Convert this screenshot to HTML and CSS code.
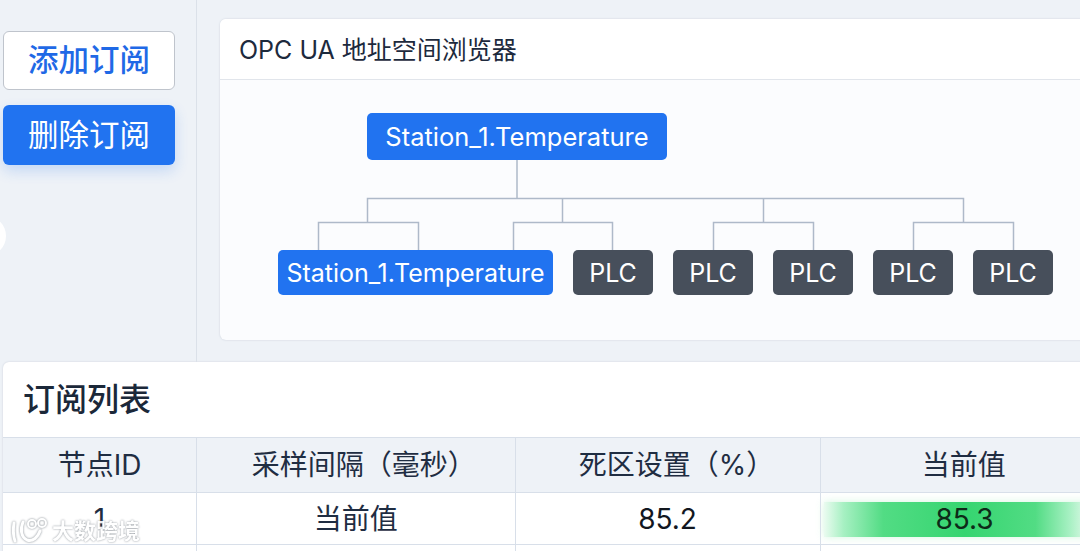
FILE: index.html
```html
<!DOCTYPE html>
<html lang="zh-CN">
<head>
  <meta charset="UTF-8" />
  <meta name="viewport" content="width=device-width, initial-scale=1.0"/>
  <title>OPC UA 订阅</title>
  <link rel="stylesheet" href="styles.css">
</head>
<body>
  <div class="page">
    <div class="top">
      <aside class="side">
        <button class="btn btn-outline">添加订阅</button>
        <button class="btn btn-primary">删除订阅</button>
      </aside>
      <main class="main">
        <section class="browser">
          <h2 class="browser-title">OPC UA 地址空间浏览器</h2>
          <div class="tree">
            <!-- 连接线 -->
            <svg class="tree-lines" width="860" height="261" fill="none" stroke="#aeb9c9" stroke-width="1.5">
              <path d="M297 80V118M147.500 142V118.500H743.500V142M342.500 118.500V142M543.500 118.500V142"/>
              <path d="M98.500 170V142.500H198.500V170M293.500 170V142.500H392.500V170"/>
              <path d="M493.500 170V142.500H593.500V170M693.500 170V142.500H793.500V170"/>
            </svg>
            <div class="node node-root">Station_1.Temperature</div>
            <div class="leaves">
              <div class="node node-wide">Station_1.Temperature</div>
              <div class="node node-plc">PLC</div>
              <div class="node node-plc">PLC</div>
              <div class="node node-plc">PLC</div>
              <div class="node node-plc">PLC</div>
              <div class="node node-plc">PLC</div>
            </div>
          </div>
        </section>
      </main>
    </div>

    <section class="list">
      <h2 class="list-title">订阅列表</h2>
      <table class="table">
        <thead>
          <tr>
            <th class="col-id">节点ID</th>
            <th class="col-rate">采样间隔（毫秒）</th>
            <th class="col-dead">死区设置（%）</th>
            <th class="col-val">当前值</th>
          </tr>
        </thead>
        <tbody>
          <tr>
            <td>1</td>
            <td>当前值</td>
            <td class="num">85.2</td>
            <td class="num cell-live"><span class="live">85.3</span></td>
          </tr>
          <tr>
            <td></td><td></td><td></td><td></td>
          </tr>
        </tbody>
      </table>
    </section>
  </div>

  <div class="handle"></div>

  <div class="mark">
    <svg class="mark-logo" width="40" height="26" viewBox="0 0 40 26" fill="none" stroke="#fff" stroke-width="3" stroke-linecap="round">
      <path d="M5 5C4 11 4 17 6 23"/>
      <path d="M14 4C11 11 12 19 18 22C24 24 29 19 31 13"/>
      <circle cx="23" cy="6" r="4" stroke-width="2"/>
      <circle cx="33" cy="5" r="4" stroke-width="2"/>
    </svg>
    <span class="mark-text">大数跨境</span>
  </div>
</body>
</html>
```

FILE: styles.css
```css
html, body {
  margin: 0;
  height: 100%;
  overflow: hidden;
}
body {
  position: relative;
  background: #eef2f7;
  color: #1f2d42;
  font-family: "Inter", "Noto Sans CJK SC", sans-serif;
}
.page {
  width: 1110px;
}
.top {
  display: flex;
  height: 362px;
}
.side {
  box-sizing: border-box;
  width: 197px;
  padding: 31px 0 0 3px;
  border-right: 1px solid #dbe1e9;
}
.btn {
  display: block;
  box-sizing: border-box;
  width: 172px;
  height: 60px;
  border-radius: 6px;
  font-family: inherit;
  font-size: 30.500px;
  line-height: 1;
  padding: 0;
}
.btn-outline {
  height: 59px;
  background: #fff;
  border: 1px solid #bfc4cc;
  color: #1f69e6;
  font-weight: 500;
  margin-bottom: 15px;
}
.btn-primary {
  background: #2173f0;
  border: 0;
  color: #fff;
  box-shadow: 0 6px 14px rgba(33, 115, 240, 0.2);
}
.main {
  flex: 1;
  padding: 19px 0 0 23px;
}
.browser {
  height: 321px;
  background: #fbfcfe;
  border-radius: 6px 0 0 6px;
  box-shadow: 0 0 2px rgba(90, 105, 130, 0.25);
}
.browser-title {
  box-sizing: border-box;
  height: 61px;
  margin: 0;
  padding: 0 20px 0 19px;
  background: #fff;
  border-bottom: 1px solid #e1e5eb;
  border-radius: 6px 0 0 0;
  font-size: 25px;
  font-weight: 400;
  line-height: 62px;
  color: #1d2a3d;
}
.tree {
  position: relative;
  padding: 33px 0 0 58px;
}
.tree-lines {
  position: absolute;
  top: 0;
  left: 0;
}
.node {
  position: relative;
  box-sizing: border-box;
  display: flex;
  align-items: center;
  justify-content: center;
  border-radius: 5px;
  color: #fff;
  font-size: 25px;
  white-space: nowrap;
}
.node-root {
  width: 300px;
  height: 47px;
  margin-left: 89px;
  background: #2173f0;
  font-size: 25.500px;
}
.leaves {
  display: flex;
  gap: 20px;
  margin-top: 90px;
}
.node-wide {
  width: 275px;
  height: 45px;
  background: #2173f0;
}
.node-plc {
  width: 80px;
  height: 45px;
  background: #474f5b;
}
.list {
  margin-left: 3px;
  background: #fff;
  border-radius: 6px 0 0 0;
  box-shadow: 0 0 2px rgba(90, 105, 130, 0.25);
}
.list-title {
  box-sizing: border-box;
  height: 75px;
  margin: 0;
  padding-left: 20px;
  font-size: 32px;
  font-weight: 500;
  line-height: 76px;
  color: #1b2839;
}
.table {
  width: 1105px;
  border-collapse: collapse;
  table-layout: fixed;
  font-size: 28px;
}
.table th, .table td {
  padding: 0;
  text-align: center;
  border: 1px solid #d8dfe9;
  font-weight: 400;
}
.table tr > :first-child {
  border-left: 0;
}
.table th {
  height: 54px;
  background: #eef2f7;
  color: #1f2d42;
  line-height: 50px;
}
.table td {
  height: 51px;
  background: #fff;
  line-height: 50px;
}
.col-id { width: 193px; }
.col-rate { width: 318.500px; }
.col-dead { width: 305px; }
.table th.col-rate { padding-left: 16px; box-sizing: border-box; }
.table th.col-dead { padding-left: 18px; box-sizing: border-box; }
.num {
  color: #12171f;
}
.table td.cell-live {
  vertical-align: middle;
}
.live {
  display: block;
  height: 35px;
  line-height: 35px;
  margin: 2px 0 0 3px;
  width: 282px;
  background: linear-gradient(90deg, #eafbf0 0, #a6f0c2 7%, #52dc84 21%, #35d570 50%, #52dc84 75%, #a6f0c2 87%, #eafbf0 95%);
  box-shadow: 0 0 8px rgba(120, 230, 160, 0.3);
  color: #0d2a18;
}
.handle {
  position: absolute;
  left: -34px;
  top: 216px;
  width: 40px;
  height: 40px;
  border-radius: 50%;
  background: #fff;
}
.mark {
  position: absolute;
  left: 9px;
  top: 518px;
  display: flex;
  align-items: center;
  gap: 3px;
  opacity: 0.9;
}
.mark-logo {
  filter: drop-shadow(0 0 1px rgba(80, 90, 100, 0.8));
}
.mark-text {
  color: #fff;
  font-size: 22px;
  font-weight: 700;
  line-height: 26px;
  text-shadow: 0 0 2px rgba(80, 90, 100, 0.8);
}
```
